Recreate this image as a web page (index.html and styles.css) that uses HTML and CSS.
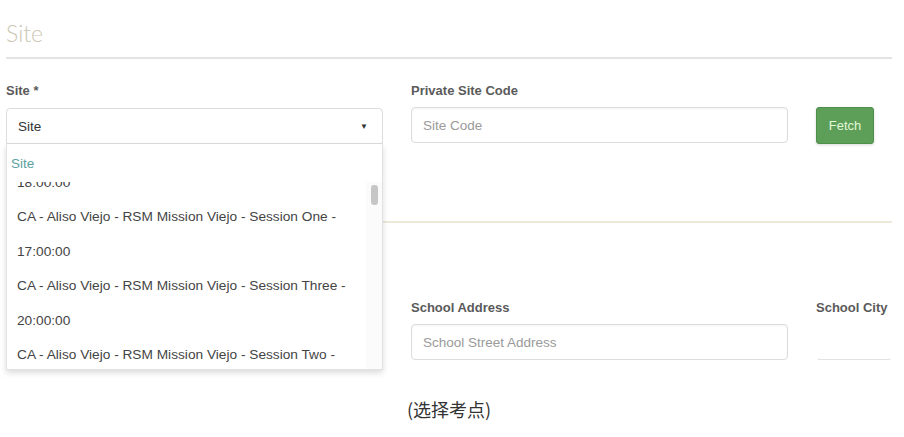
FILE: index.html
```html
<!DOCTYPE html>
<html lang="en">
<head>
  <meta charset="UTF-8" />
  <title>Site</title>
  <link rel="stylesheet" href="styles.css">
</head>
<body>

  <div class="page">
    <h2 class="section-title">Site</h2>

    <div class="row row-site">
      <div class="field field-select">
        <label>Site *</label>
        <div class="select">
          <span>Site</span>
          <span class="caret">&#9660;</span>
        </div>

        <!-- open dropdown -->
        <div class="dropdown">
          <div class="option-current">Site</div>
          <div class="options">
            <div class="options-inner">
              <div class="option">CA - Aliso Viejo - RSM Mission Viejo - Session Four - 18:00:00</div>
              <div class="option">CA - Aliso Viejo - RSM Mission Viejo - Session One - 17:00:00</div>
              <div class="option">CA - Aliso Viejo - RSM Mission Viejo - Session Three - 20:00:00</div>
              <div class="option">CA - Aliso Viejo - RSM Mission Viejo - Session Two - 19:00:00</div>
            </div>
          </div>
          <div class="scroll-thumb"></div>
        </div>
      </div>

      <div class="field">
        <label>Private Site Code</label>
        <input type="text" placeholder="Site Code">
      </div>

      <div class="field field-btn">
        <button class="btn-fetch">Fetch</button>
      </div>
    </div>

    <div class="divider"></div>

    <div class="row row-school">
      <div class="field"></div>
      <div class="field">
        <label>School Address</label>
        <input type="text" placeholder="School Street Address">
      </div>
      <div class="field">
        <label>School City</label>
        <input class="input-faint" type="text">
      </div>
    </div>

    <p class="caption">(选择考点)</p>
  </div>

</body>
</html>
```

FILE: styles.css
```css
body {
  margin: 0;
  background: #fff;
  font-family: 'Liberation Sans', Arial, sans-serif;
  color: #333;
}

.page {
  padding: 18px 12px 0 6px;
}

.section-title {
  margin: 0;
  font-family: 'Lato', 'Liberation Sans', sans-serif;
  font-weight: 300;
  font-size: 23px;
  line-height: 30px;
  color: #cbc7b5;
  padding-bottom: 9px;
  border-bottom: 2px solid #e3e3e3;
}

.row {
  display: grid;
  grid-template-columns: 377px 377px 1fr;
  column-gap: 28px;
}
.row-site {
  margin-top: 24px;
}
.row-school {
  margin-top: 77px;
}

.field {
  position: relative;
  display: flex;
  flex-direction: column;
}
.field label {
  font-size: 13px;
  font-weight: bold;
  line-height: 16px;
  color: #5a5a5a;
  margin-bottom: 8px;
  white-space: nowrap;
}
.field-btn {
  justify-content: flex-end;
}

.field input {
  box-sizing: border-box;
  height: 36px;
  width: 100%;
  padding: 0 11px;
  border: 1px solid #dcdcdc;
  border-radius: 4px;
  box-shadow: inset 0 1px 2px rgba(0,0,0,0.05);
  font-family: inherit;
  font-size: 13.5px;
  color: #333;
  background: #fff;
}
.field input::placeholder {
  color: #9a9a9a;
}
.field .input-faint {
  border-color: #fff #fff #e2e2e2;
  box-shadow: none;
}

.select {
  box-sizing: border-box;
  height: 36px;
  margin-top: 1px;
  display: flex;
  align-items: center;
  justify-content: space-between;
  padding: 0 14px 0 11px;
  border: 1px solid #dcdcdc;
  border-radius: 4px 4px 0 0;
  font-size: 13.5px;
  color: #333;
}
.select .caret {
  font-size: 8px;
  color: #333;
}

/* open dropdown list */
.dropdown {
  position: absolute;
  top: 100%;
  left: 0;
  width: 377px;
  height: 226px;
  box-sizing: border-box;
  background: #fff;
  border: 1px solid #e2e2e2;
  border-top: none;
  box-shadow: 0 3px 6px rgba(0,0,0,0.14);
  z-index: 10;
}
.option-current {
  height: 38px;
  padding: 6px 0 0 4px;
  box-sizing: border-box;
  font-size: 13.5px;
  line-height: 28px;
  color: #5e9fa3;
}
.options {
  height: 187px;
  overflow: hidden;
  border-right: 16px solid #fbfbfb;
}
.options-inner {
  margin-top: -51px;
}
.option {
  padding: 0 10px;
  font-size: 13.7px;
  line-height: 34.5px;
  color: #444;
}
.scroll-thumb {
  position: absolute;
  top: 41px;
  left: 364px;
  width: 7px;
  height: 20px;
  border-radius: 3px;
  background: #c6c6c6;
}

.btn-fetch {
  height: 37px;
  width: 58px;
  border: 1px solid #4f8f4c;
  border-radius: 3px;
  background: #5d9f59;
  color: #e2f8da;
  font-family: inherit;
  font-size: 13px;
  box-shadow: 0 1px 3px rgba(0,0,0,0.15);
}

.divider {
  margin-top: 77px;
  border-top: 2px solid #ece9d9;
}

.caption {
  margin: 36px 0 0;
  text-align: center;
  font-family: 'Noto Sans CJK SC', sans-serif;
  font-size: 18px;
  color: #333;
}
```
